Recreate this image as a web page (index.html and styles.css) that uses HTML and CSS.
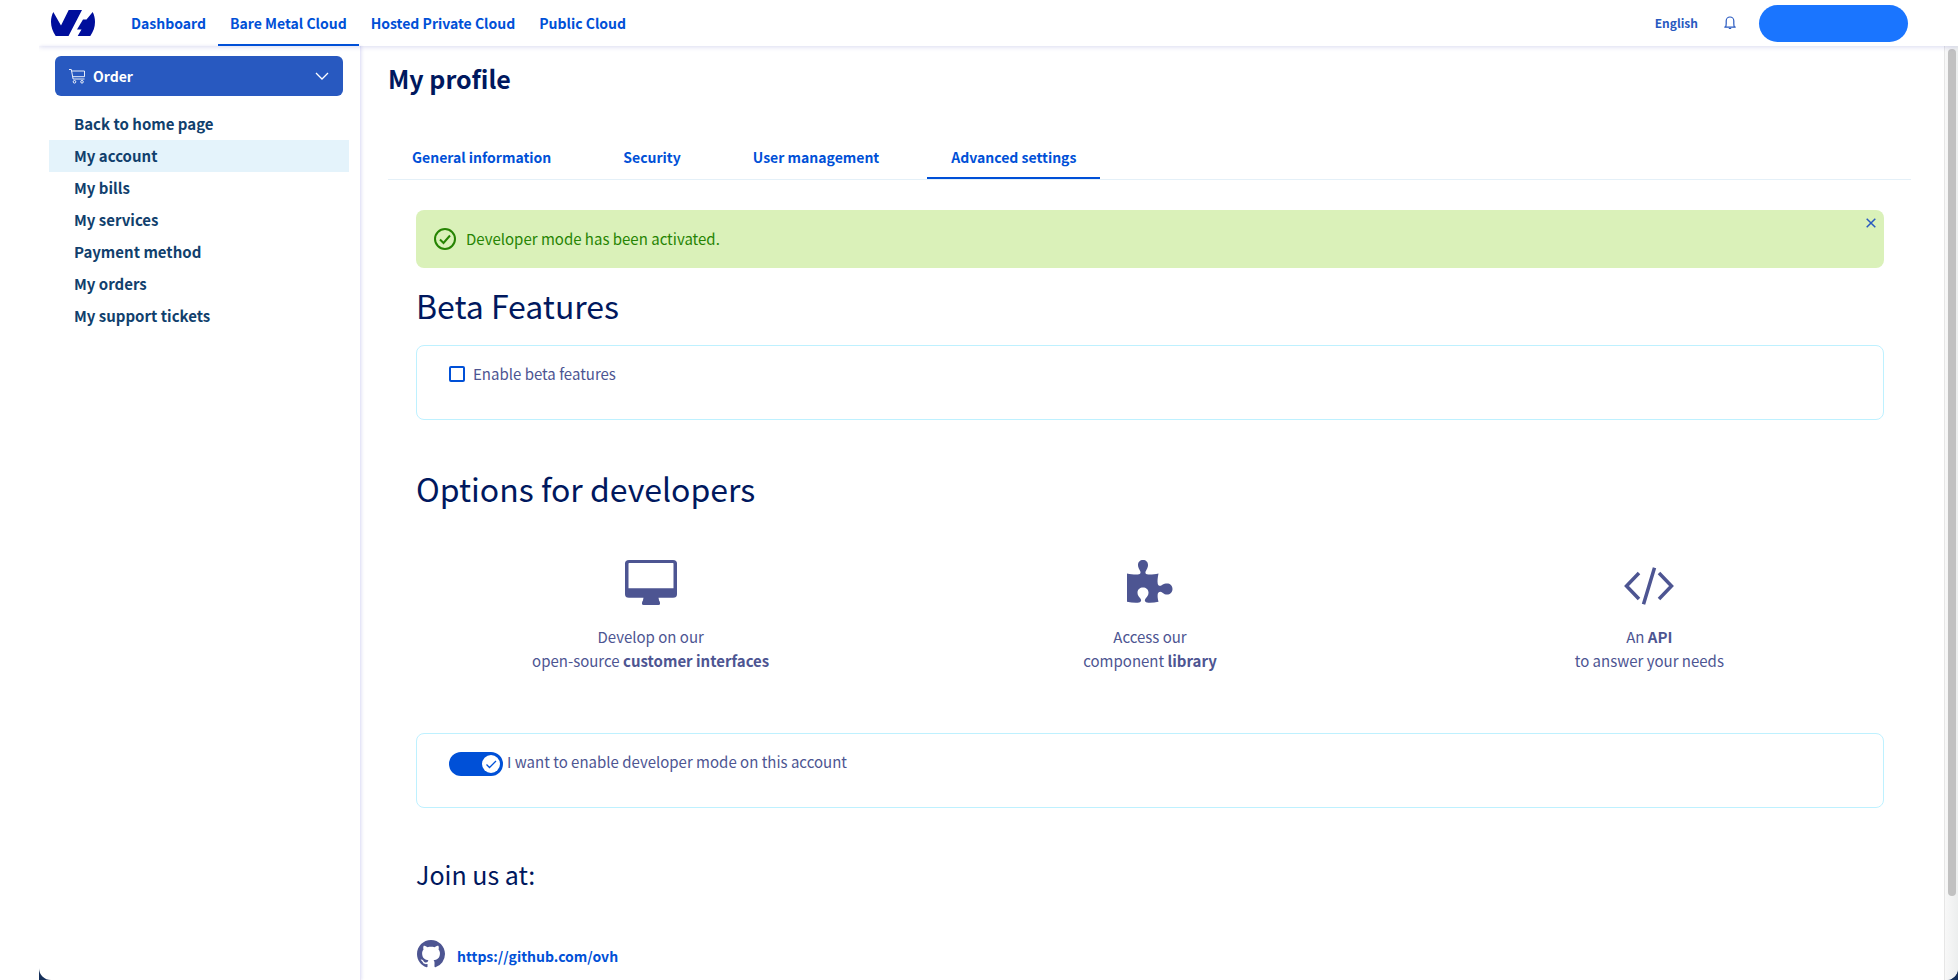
FILE: index.html
```html
<!DOCTYPE html>
<html lang="en">
<head>
<meta charset="utf-8">
<title>My profile</title>
<link rel="stylesheet" href="styles.css">
</head>
<body>
<div class="frame">
<div class="app">
  <header class="topbar">
    <a class="logo" href="#" aria-label="OVHcloud home">
      <svg width="44" height="26" viewBox="0 0 44 26" aria-hidden="true"><path fill="#000e9c" d="M2.3 2 10 15.600 17.700 0H31L17.500 26H4.700C1.600 21.500 0 16.800 0 12 0 8.300.8 5 2.300 2ZM41.700 2C43.200 5 44 8.300 44 12c0 5-1.600 9.500-4.700 14H26.700l3.800-6.500H26l6-10h3.500Z"/></svg>
    </a>
    <nav class="mainnav" aria-label="Universe">
      <a href="#">Dashboard</a>
      <a href="#" class="active">Bare Metal Cloud</a>
      <a href="#">Hosted Private Cloud</a>
      <a href="#">Public Cloud</a>
    </nav>
    <div class="tools">
      <button class="lang" type="button">English</button>
      <button class="bell" type="button" aria-label="Notifications">
        <svg width="12" height="14" viewBox="0 0 12 14" fill="none" stroke="#2859c0" stroke-width="1.200" aria-hidden="true"><path d="M.3 11.200h11.400M1.500 11c.6-1 .7-2 .7-3.500V4.800a3.800 3.800 0 0 1 7.600 0v2.700c0 1.500.1 2.500.7 3.500M4.800 12.500h2.400"/></svg>
      </button>
      <button class="account" type="button" aria-label="Account"></button>
    </div>
  </header>
  <div class="body">
    <aside class="sidebar">
      <button class="order" type="button">
        <svg width="16" height="15" viewBox="0 0 16 15" fill="none" stroke="#fff" stroke-width=".9" aria-hidden="true"><path d="M0 .5h2.300l1.800 9.500h11.400M2.700 2H15.500v5.700H3.700"/><circle cx="5.500" cy="12.800" r="1.300"/><circle cx="13" cy="12.800" r="1.300"/></svg>
        <span>Order</span>
        <svg class="chev" width="14" height="8" viewBox="0 0 14 8" fill="none" stroke="#fff" stroke-width="1.300" aria-hidden="true"><path d="m1 1 6 6 6-6"/></svg>
      </button>
      <nav class="menu" aria-label="Account">
        <a href="#">Back to home page</a>
        <a href="#" class="active">My account</a>
        <a href="#">My bills</a>
        <a href="#">My services</a>
        <a href="#">Payment method</a>
        <a href="#">My orders</a>
        <a href="#">My support tickets</a>
      </nav>
    </aside>
    <main class="main">
      <h1>My profile</h1>
      <nav class="tabs" aria-label="Profile">
        <a href="#">General information</a>
        <a href="#">Security</a>
        <a href="#">User management</a>
        <a href="#" class="active">Advanced settings</a>
      </nav>
      <div class="content">
        <div class="alert" role="status">
          <svg width="22" height="22" viewBox="0 0 22 22" fill="none" stroke="#268403" stroke-width="2" aria-hidden="true"><circle cx="11" cy="11" r="10"/><path d="m6 11.500 3.500 3.500L16 7.500"/></svg>
          <p>Developer mode has been activated.</p>
          <button class="close" type="button" aria-label="Close">
            <svg width="10" height="10" viewBox="0 0 10 10" stroke="#2859c0" stroke-width="1.500" aria-hidden="true"><path d="m.7.700 8.600 8.600M9.300.700.7 9.300"/></svg>
          </button>
        </div>
        <h2>Beta Features</h2>
        <section class="box">
          <input class="check" type="checkbox" id="beta"><label for="beta">Enable beta features</label>
        </section>
        <h2 class="dev">Options for developers</h2>
        <div class="options">
          <div class="option">
            <svg width="52" height="45" viewBox="0 0 52 45" fill="#4d5592" aria-hidden="true"><path fill-rule="evenodd" d="M4 0h44a4 4 0 0 1 4 4v35a4 4 0 0 1-4 4H33l.5-.0 1 5 H17.500l1-5H4a4 4 0 0 1-4-4V4a4 4 0 0 1 4-4Zm0 3.500a.5.500 0 0 0-.5.500v28h45V4a.5.500 0 0 0-.5-.5Z" transform="scale(1 .88)"/><rect x="17" y="41" width="18" height="4" rx="1.500"/></svg>
            <p>Develop on our<br>open-source <strong>customer interfaces</strong></p>
          </div>
          <div class="option">
            <svg width="46" height="45" viewBox="0 0 46 45" fill="#4d5592" aria-hidden="true"><path d="M0 13.500c4 .8 9 1.300 12 .8 2.500-.5 1.500-2.800.5-4.500C11.500 8 11 6.500 11 5c0-3 2-5 5-5s5 2 5 5c0 1.500-.5 3-1.500 4.800-1 1.700-2 4 .5 4.500 3 .5 7.500 0 11.500-.8-.8 4-1.200 7-.8 10 .3 2.500 2.500 3 4.300 1.500s3.500-1.500 5-1.500c3 0 5.500 2 5.500 5.500s-2.500 5.500-5.500 5.500c-1.500 0-3-.5-4.500-1.800-2-1.700-4.500-1-4.800 1.500-.3 2.500.1 4.500.8 7.500-4 .8-8 1.300-11.500.8-2.500-.5-2.700-2.700-1-4.500 1.500-1.700 2.500-3 2.500-5.500 0-3-2.500-5-5.500-5s-5.500 2-5.500 5c0 2.500 1 3.800 2.500 5.500 1.700 1.800 1.500 4-1 4.500-3.500.5-8 0-12-.8Z"/></svg>
            <p>Access our<br>component <strong>library</strong></p>
          </div>
          <div class="option">
            <svg width="50" height="45" viewBox="0 -7 50 45" fill="none" stroke="#4d5592" stroke-width="3.500" aria-hidden="true"><path d="M15 6 2.500 19 15 32M35 6l12.500 13L35 32M30.500.700l-11 36.600"/></svg>
            <p>An <strong>API</strong><br>to answer your needs</p>
          </div>
        </div>
        <section class="box">
          <input class="switch" type="checkbox" id="devmode" checked><label for="devmode">I want to enable developer mode on this account</label>
        </section>
        <h3>Join us at:</h3>
        <div class="join">
          <svg width="28" height="28" viewBox="0 0 16 16" fill="#4d5592" aria-hidden="true"><path d="M8 0C3.580 0 0 3.580 0 8c0 3.540 2.290 6.530 5.470 7.590.4.070.55-.17.55-.38 0-.19-.01-.82-.01-1.490-2.010.37-2.530-.49-2.690-.94-.09-.23-.48-.94-.82-1.130-.28-.15-.68-.52-.01-.53.63-.01 1.080.58 1.230.82.72 1.210 1.870.87 2.330.66.07-.52.28-.87.51-1.070-1.780-.2-3.640-.89-3.640-3.950 0-.87.31-1.590.82-2.150-.08-.2-.36-1.020.08-2.120 0 0 .67-.21 2.200.82.64-.18 1.320-.27 2-.27s1.360.09 2 .27c1.530-1.040 2.200-.82 2.200-.82.44 1.100.16 1.920.08 2.120.51.56.82 1.270.82 2.150 0 3.070-1.870 3.750-3.650 3.950.29.25.54.73.54 1.480 0 1.070-.01 1.930-.01 2.200 0 .21.15.46.55.38A8.010 8.010 0 0 0 16 8c0-4.420-3.580-8-8-8Z"/></svg>
          <a href="#">https://github.com/ovh</a>
        </div>
      </div>
    </main>
    <div class="track"><div class="thumb"></div></div>
  </div>
</div>
</div>
</body>
</html>
```
FILE: styles.css
```css
* { box-sizing: border-box; }
body {
  margin: 0;
  padding-left: 39px;
  background: #fff;
  color: #4d5592;
  font: 15px/24px "Noto Sans CJK SC", "Noto Sans", sans-serif;
}
h1, h2, h3, p { margin: 0; }
a { text-decoration: none; }
svg { display: block; flex: none; }
button { font: inherit; border: 0; padding: 0; background: none; cursor: pointer; }
.frame { background: #16305a; }
.app {
  display: flex;
  flex-direction: column;
  min-height: 100vh;
  background: #fff;
  border-radius: 0 0 12px 12px;
  overflow: hidden;
}
.topbar {
  display: flex;
  align-items: center;
  height: 46px;
  padding: 0 50px 0 12px;
  box-shadow: 0 0 6px rgba(0, 14, 156, .2);
  z-index: 1;
}
.mainnav { display: flex; align-self: stretch; margin-left: 24px; }
.mainnav a {
  padding: 11px 12px 0;
  color: #0050d7;
  font-size: 14px;
  font-weight: 700;
  border-bottom: 2px solid transparent;
}
.mainnav .active { border-color: #0050d7; }
.tools { display: flex; align-items: center; margin-left: auto; }
.lang { color: #2859c0; font-size: 12px; font-weight: 700; }
.bell { margin: 0 23px 0 26px; }
.account { width: 149px; height: 37px; border-radius: 19px; background: #1a75ff; }
.body { display: flex; flex: 1; }
.sidebar {
  flex: none;
  width: 322px;
  padding: 10px 11px 0 10px;
  border-right: 1px solid #e6e6f8;
  box-shadow: 1px 0 3px rgba(0, 14, 156, .1);
}
.order {
  display: flex;
  align-items: center;
  width: 288px;
  height: 40px;
  margin-left: 6px;
  padding: 0 14px;
  gap: 8px;
  border-radius: 6px;
  background: #2859c0;
  color: #fff;
  font-size: 14px;
  font-weight: 700;
}
.chev { margin-left: auto; }
.menu { display: flex; flex-direction: column; margin-top: 12px; }
.menu a { padding: 4px 25px; color: #113f6d; font-weight: 700; }
.menu .active { background: #e4f3fb; }
.main { flex: 1; min-width: 0; padding: 16px 33px 8px 27px; }
h1 { font-size: 25px; line-height: 32px; color: #00185e; }
.tabs {
  display: flex;
  gap: 24px;
  margin-top: 40px;
  border-bottom: 1px solid #e4f0f8;
}
.tabs a {
  padding: 11px 24px 8px;
  color: #0050d7;
  font-size: 14px;
  font-weight: 700;
  border-bottom: 2px solid transparent;
}
.tabs .active { border-color: #0050d7; }
.content { padding: 30px 27px 0 28px; }
.alert {
  display: flex;
  align-items: center;
  gap: 10px;
  height: 58px;
  padding: 0 8px 0 18px;
  border-radius: 8px;
  background: #daf1b9;
  color: #268403;
}
.close { align-self: flex-start; margin: 8px 0 0 auto; }
h2 { margin-top: 13px; font-size: 32px; line-height: 48px; font-weight: 400; color: #00185e; }
.dev { margin-top: 44px; }
.box {
  display: flex;
  align-items: flex-start;
  min-height: 75px;
  margin-top: 16px;
  padding: 16px 32px;
  border: 1px solid #bef1ff;
  border-radius: 8px;
}
.check {
  appearance: none;
  width: 16px;
  height: 16px;
  margin: 4px 8px 0 0;
  border: 2px solid #0050d7;
  border-radius: 2px;
}
.options { display: grid; grid-template-columns: repeat(3, 1fr); margin: 48px -15px 0; }
.option { display: flex; flex-direction: column; align-items: center; text-align: center; }
.option svg { margin-bottom: 20px; }
.options + .box { margin-top: 60px; }
.switch {
  appearance: none;
  display: flex;
  justify-content: flex-end;
  width: 54px;
  height: 24px;
  margin: 2px 4px 0 0;
  padding: 3px;
  border-radius: 12px;
  background: #0050d7;
}
.switch::before {
  content: "";
  width: 18px;
  height: 18px;
  border-radius: 50%;
  background: #fff url("data:image/svg+xml,%3Csvg xmlns='http://www.w3.org/2000/svg' viewBox='0 0 18 18'%3E%3Cpath d='m4.500 9.500 3 3 6.500-6.500' fill='none' stroke='%230050d7' stroke-width='1.300'/%3E%3C/svg%3E");
}
h3 { margin-top: 48px; font-size: 25px; line-height: 36px; font-weight: 400; color: #00185e; }
.join { display: flex; align-items: flex-end; gap: 12px; margin-top: 48px; padding-left: 1px; }
.join a { color: #0050d7; font-size: 14px; font-weight: 700; }
.track {
  flex: none;
  width: 14px;
  padding: 3px 2px 0 3px;
  border-left: 1px solid #e6e6e6;
  background: linear-gradient(90deg, #f8f8f8, #eceeee);
}
.thumb { height: 91%; border-radius: 4px; background: #c1c1c1; }
```
